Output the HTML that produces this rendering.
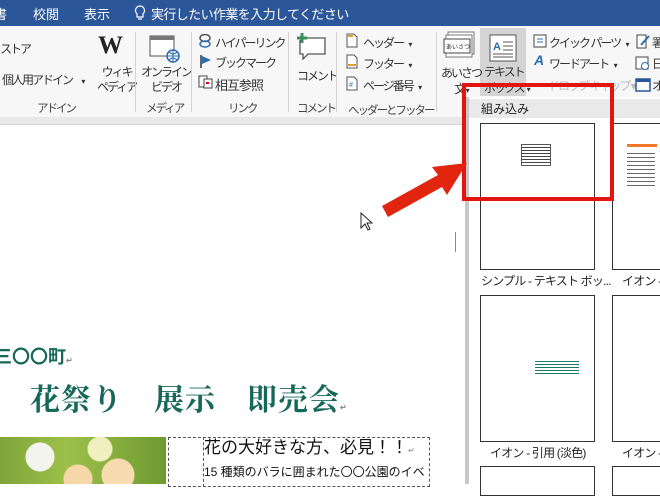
<!DOCTYPE html>
<html><head><meta charset="utf-8"><style>
*{margin:0;padding:0;box-sizing:border-box}
body{width:660px;height:484px;overflow:hidden;position:relative;background:#fff;font-family:"Liberation Sans","Noto Sans CJK JP",sans-serif;color:#222}
.a{position:absolute;white-space:nowrap}
.t{font-size:12px;color:#333;letter-spacing:-2px}
.lbl{font-size:11.5px;color:#444;letter-spacing:-2px}
.sep{position:absolute;top:32px;width:1px;height:80px;background:#d4d4d4}
</style></head><body>
<div class="a" style="left:0;top:0;width:660px;height:26px;background:#2b579a"></div>
<div class="a" style="left:-6px;top:4px;color:#fff;font-size:13px">書</div>
<div class="a" style="left:33px;top:4px;color:#fff;font-size:13px">校閲</div>
<div class="a" style="left:84px;top:4px;color:#fff;font-size:13px">表示</div>
<svg class="a" style="left:134px;top:5px" width="12" height="16"><path d="M6 1a4.5 4.5 0 0 0-3 7.8V12h6V8.8A4.5 4.5 0 0 0 6 1zM4 14h4" fill="none" stroke="#fff" stroke-width="1.2"/></svg>
<div class="a" style="left:151px;top:4px;color:#fff;font-size:13px;letter-spacing:-0.6px">実行したい作業を入力してください</div>
<div class="a" style="left:0;top:26px;width:660px;height:91px;background:#f7f7f7"></div>
<div class="a" style="left:0;top:117px;width:660px;height:8px;background:#e8e8e8;border-bottom:1px solid #d6d6d6"></div>
<div class="a" style="left:480px;top:28px;width:46px;height:68px;background:#d4d4d4"></div>
<!-- addin group -->
<div class="a t" style="left:0;top:40px">ストア</div>
<div class="a t" style="left:2px;top:71px">個人用アドイン <span style="font-size:8px;margin-left:8px">▾</span></div>
<div class="a" style="left:98px;top:32px;font-family:'Liberation Serif',serif;font-size:25px;font-weight:bold;color:#222">W</div>
<div class="a t" style="left:97px;top:65px;line-height:15px;text-align:center">ウィキ<br>ペディア</div>
<div class="a lbl" style="left:37px;top:100px">アドイン</div>
<div class="sep" style="left:135px"></div>
<svg class="a" style="left:149px;top:35px" width="32" height="28"><rect x="1" y="1" width="24" height="20" fill="#fff" stroke="#555"/><rect x="1" y="1" width="24" height="4" fill="#777"/><circle cx="24" cy="21" r="6" fill="#fff" stroke="#2b6cb0" stroke-width="1.5"/><path d="M18 21h12M24 15v12M20 17q4 4 8 0M20 25q4-4 8 0" stroke="#2b6cb0" fill="none"/></svg>
<div class="a t" style="left:141px;top:65px;line-height:15px;text-align:center">オンライン<br>ビデオ</div>
<div class="a lbl" style="left:146px;top:100px">メディア</div>
<div class="sep" style="left:191px"></div>
<svg class="a" style="left:197px;top:34px" width="16" height="14"><ellipse cx="8" cy="4" rx="5" ry="3.5" fill="none" stroke="#555" stroke-width="1.5"/><ellipse cx="8" cy="10" rx="5" ry="3" fill="none" stroke="#2b6cb0" stroke-width="1.5"/></svg>
<div class="a t" style="left:215px;top:34px">ハイパーリンク</div>
<svg class="a" style="left:199px;top:54px" width="14" height="14"><path d="M2 1v13" stroke="#333" stroke-width="1.5"/><path d="M3 2l9 4-9 4z" fill="#2b6cb0"/></svg>
<div class="a t" style="left:215px;top:54px">ブックマーク</div>
<svg class="a" style="left:198px;top:75px" width="15" height="14"><rect x="1" y="1" width="8" height="11" fill="#fff" stroke="#444"/><rect x="6" y="4" width="8" height="9" fill="#fff" stroke="#444"/><rect x="8" y="7" width="3" height="2" fill="#d00"/></svg>
<div class="a t" style="left:215px;top:75px;font-size:13px;letter-spacing:-1px">相互参照</div>
<div class="a lbl" style="left:228px;top:100px">リンク</div>
<div class="sep" style="left:288px"></div>
<svg class="a" style="left:296px;top:32px" width="32" height="28"><path d="M6 6h23v16H12l-5 5v-5H4V8" fill="#fff" stroke="#555" stroke-width="1.3"/><path d="M6 1v10M1 6h10" stroke="#3a8f5a" stroke-width="3"/></svg>
<div class="a t" style="left:297px;top:67px">コメント</div>
<div class="a lbl" style="left:297px;top:100px">コメント</div>
<div class="sep" style="left:336px"></div>
<svg class="a" style="left:346px;top:33px" width="12" height="15"><path d="M1 1h7l3 3v10H1z" fill="#fff" stroke="#555"/><rect x="2" y="2" width="5" height="2" fill="#e0a030"/></svg>
<div class="a t" style="left:363px;top:34px">ヘッダー <span style="font-size:8px;margin-left:4px">▾</span></div>
<svg class="a" style="left:346px;top:54px" width="12" height="15"><path d="M1 1h7l3 3v10H1z" fill="#fff" stroke="#555"/><rect x="2" y="10" width="8" height="2" fill="#e0a030"/></svg>
<div class="a t" style="left:363px;top:55px">フッター <span style="font-size:8px;margin-left:4px">▾</span></div>
<svg class="a" style="left:346px;top:76px" width="12" height="15"><path d="M1 1h7l3 3v10H1z" fill="#fff" stroke="#555"/><text x="3" y="11" font-size="7" fill="#2b6cb0" font-family="Liberation Sans">#</text></svg>
<div class="a t" style="left:363px;top:77px">ページ番号 <span style="font-size:8px;margin-left:4px">▾</span></div>
<div class="a lbl" style="left:348px;top:102px">ヘッダーとフッター</div>
<div class="sep" style="left:436px"></div>
<svg class="a" style="left:443px;top:31px" width="32" height="32"><rect x="5" y="1" width="26" height="22" fill="#fff" stroke="#777"/><rect x="3" y="4" width="26" height="22" fill="#fff" stroke="#777"/><rect x="1" y="8" width="26" height="14" fill="#fff" stroke="#444"/><text x="3" y="18" font-size="6" fill="#222" font-family="Noto Sans CJK JP">あいさつ</text></svg>
<div class="a t" style="left:441px;top:65px;line-height:16px;text-align:center">あいさつ<br>文 <span style="font-size:8px">▾</span></div>
<svg class="a" style="left:489px;top:34px" width="28" height="28"><rect x="1" y="1" width="26" height="26" fill="#fff" stroke="#555"/><text x="4" y="16" font-size="11" font-weight="bold" fill="#2b6cb0" font-family="Liberation Sans">A</text><path d="M14 8h10M14 12h10M14 16h10M4 20h20M4 23h20" stroke="#555"/></svg>
<div class="a t" style="left:484px;top:64px;line-height:16px">テキスト<br>ボックス<span style="font-size:8px;margin-left:3px">▾</span></div>
<svg class="a" style="left:533px;top:34px" width="14" height="14"><rect x="1" y="1" width="12" height="12" fill="#fff" stroke="#444"/><path d="M4 5h6M4 8h6" stroke="#2b6cb0"/></svg>
<div class="a t" style="left:549px;top:34px">クイック パーツ <span style="font-size:8px;margin-left:4px">▾</span></div>
<div class="a" style="left:534px;top:52px;color:#2b6cb0;font-weight:bold;font-style:italic;font-size:14px">A</div>
<div class="a t" style="left:549px;top:55px">ワードアート <span style="font-size:8px;margin-left:4px">▾</span></div>
<div class="a t" style="left:548px;top:77px;color:#bbb">ドロップ キャップ ▾</div>
<svg class="a" style="left:635px;top:33px" width="16" height="60"><path d="M2 2h9v13H2z" fill="#fff" stroke="#444"/><path d="M6 12l8-9" stroke="#2b6cb0" stroke-width="2"/><rect x="1" y="24" width="12" height="12" fill="#fff" stroke="#444"/><circle cx="10" cy="33" r="3.5" fill="#fff" stroke="#2b6cb0"/><rect x="1" y="46" width="14" height="12" fill="#fff" stroke="#2b579a" stroke-width="1.5"/><rect x="1" y="46" width="14" height="3" fill="#2b579a"/></svg>
<div class="a t" style="left:652px;top:34px">署</div>
<div class="a t" style="left:652px;top:55px">日</div>
<div class="a t" style="left:652px;top:77px">オ</div>

<!-- document -->
<div class="a" style="left:455px;top:232px;width:1px;height:20px;background:#888"></div>
<div class="a" style="left:-6px;top:343px;font-size:18px;font-weight:bold;color:#17685a">三〇〇町<span style="font-size:8px;color:#888">↵</span></div>
<div class="a" style="left:30px;top:375px;font-family:'Liberation Serif','Noto Serif CJK SC',serif;font-size:30px;font-weight:bold;color:#17685a;letter-spacing:1px">花祭り　展示　即売会<span style="font-size:8px;color:#888">↵</span></div>
<div class="a" style="left:0;top:437px;width:166px;height:47px;background:radial-gradient(circle at 40px 20px,#f4f4ee 0 14px,transparent 15px),radial-gradient(circle at 118px 38px,#f8dcb0 0 16px,transparent 17px),radial-gradient(circle at 78px 42px,#f6d8a8 0 14px,transparent 15px),radial-gradient(circle at 100px 12px,#eef0c0 0 12px,transparent 13px),linear-gradient(90deg,#7fa43a,#9ec04a 40%,#6e9a30)"></div>
<div class="a" style="left:168px;top:437px;width:262px;height:50px;border:1px dashed #555"></div>
<div class="a" style="left:203px;top:437px;width:227px;height:50px;border-left:1px dashed #555"></div>
<div class="a" style="left:204px;top:433px;font-size:17px;color:#111">花の大好きな方、必見！！<span style="font-size:8px;color:#888">↵</span></div>
<div class="a" style="left:204px;top:463px;font-size:12px;color:#111">15 種類のバラに囲まれた〇〇公園のイベ</div>

<!-- cursor -->
<svg class="a" style="left:360px;top:212px" width="14" height="20"><path d="M1 1v15l4-4 3 6 2-1-3-6h5z" fill="#fff" stroke="#222"/></svg>

<!-- gallery -->
<div class="a" style="left:465px;top:97px;width:195px;height:387px;background:#fff;border-left:4px solid #c8c8c8"></div>
<div class="a" style="left:469px;top:99px;width:191px;height:19px;background:#e9e9e9"></div>
<div class="a" style="left:481px;top:100px;font-size:12px;color:#222">組み込み</div>
<div class="a" style="left:480px;top:123px;width:115px;height:147px;border:1.5px solid #333;background:#fff"></div>
<div class="a" style="left:521px;top:144px;width:30px;height:22px;border:1px solid #555;background:repeating-linear-gradient(#fff 0 2px,#444 2px 3px)"></div>
<div class="a" style="left:612px;top:123px;width:60px;height:147px;border:1.5px solid #333;background:#fff"></div>
<div class="a" style="left:627px;top:144px;width:30px;height:3px;background:#f07828"></div>
<div class="a" style="left:627px;top:150px;width:28px;height:36px;background:repeating-linear-gradient(#fff 0 3px,#666 3px 4px)"></div>
<div class="a" style="left:481px;top:272px;font-size:12px;color:#222;letter-spacing:-0.8px">シンプル - テキスト ボッ...</div>
<div class="a" style="left:622px;top:272px;font-size:12px;color:#222;letter-spacing:-0.8px">イオン -</div>
<div class="a" style="left:480px;top:295px;width:115px;height:147px;border:1.5px solid #333;background:#fff"></div>
<div class="a" style="left:535px;top:359px;width:44px;height:17px;background:repeating-linear-gradient(#fff 0 2px,#1a7a6a 2px 3px)"></div>
<div class="a" style="left:612px;top:295px;width:60px;height:147px;border:1.5px solid #333;background:#fff"></div>
<div class="a" style="left:490px;top:444px;font-size:12px;color:#222;letter-spacing:-0.8px">イオン - 引用 (淡色)</div>
<div class="a" style="left:622px;top:444px;font-size:12px;color:#222;letter-spacing:-0.8px">イオン -</div>
<div class="a" style="left:480px;top:466px;width:115px;height:30px;border:1.5px solid #333"></div>
<div class="a" style="left:612px;top:466px;width:60px;height:30px;border:1.5px solid #333"></div>

<!-- red annotation -->
<div class="a" style="left:462px;top:83px;width:152px;height:118px;border:4px solid #e2150f"></div>
<svg class="a" style="left:380px;top:160px" width="90" height="65"><path d="M8 57L62 27l5 8 20-32-35 4 6 8L2 46z" fill="#e2250f"/></svg>
</body></html>
